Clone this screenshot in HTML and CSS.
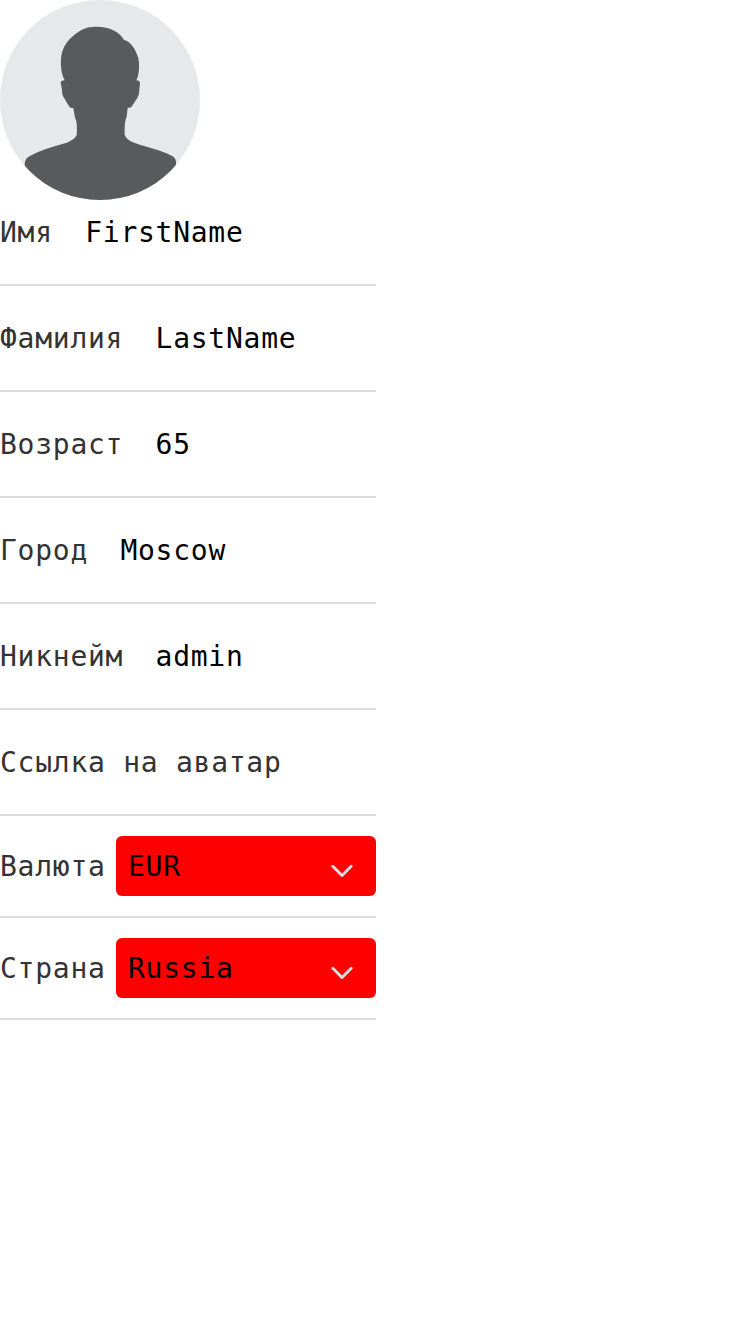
FILE: index.html
```html
<!DOCTYPE html>
<html lang="ru">
<head>
<meta charset="utf-8">
<title>Профиль</title>
<link rel="stylesheet" href="styles.css">
</head>
<body>
<main class="profile">
  <svg class="avatar" viewBox="0 0 600 600" aria-hidden="true">
    <defs><clipPath id="round"><circle cx="300" cy="300" r="300"/></clipPath></defs>
    <circle cx="300" cy="300" r="300" fill="#e7e8ea"/>
    <path clip-path="url(#round)" fill="#595a5c" d="M194 241C180 215 179 170 190 146C200 123 222 104 238 94C257 82 270 80 291 80C327 80 361 96 372 120C391 122 408 150 415 174C419 196 418 224 409 241C416 241 420 244 420 250L417 280C416 292 402 308 396 319C393 324 388 323 383 324L380 350C373 366 374 388 374 404C377 415 390 424 407 430C439 442 479 449 515 467C526 472 529 482 528 493L528 600H74V493C74 480 80 472 91 467C123 451 161 439 195 430C211 425 226 415 230 405C231 388 232 365 225 353L220 324C214 324 210 324 207 319L190 290C185 281 187 264 182 250C182 244 186 241 194 241Z"/>
  </svg>
  <div class="row"><span class="label">Имя</span><span class="value">FirstName</span></div>
  <div class="row"><span class="label">Фамилия</span><span class="value">LastName</span></div>
  <div class="row"><span class="label">Возраст</span><span class="value">65</span></div>
  <div class="row"><span class="label">Город</span><span class="value">Moscow</span></div>
  <div class="row"><span class="label">Никнейм</span><span class="value">admin</span></div>
  <div class="row"><span class="label">Ссылка на аватар</span></div>
  <div class="row row-select">
    <span class="label">Валюта</span>
    <div class="select"><span>EUR</span><svg class="chevron" viewBox="0 0 24 16"><path d="M2.8 3.3L12 12.5L21.2 3.3"/></svg></div>
  </div>
  <div class="row row-select">
    <span class="label">Страна</span>
    <div class="select"><span>Russia</span><svg class="chevron" viewBox="0 0 24 16"><path d="M2.8 3.3L12 12.5L21.2 3.3"/></svg></div>
  </div>
</main>
</body>
</html>
```
FILE: styles.css
```css
body {
  margin: 0;
  background: #fff;
  color: #000;
  font-family: "DejaVu Sans Mono", monospace;
  font-size: 28px;
  letter-spacing: 0.74px;
}
.profile {
  display: flex;
  flex-direction: column;
  gap: 20px;
  width: 376px;
}
.avatar {
  display: block;
  width: 200px;
  height: 200px;
  margin-bottom: -20px;
}
.row {
  display: flex;
  align-items: center;
  height: 64px;
  padding-bottom: 20px;
  border-bottom: 2px solid #dcdcdc;
  white-space: nowrap;
}
.row-select {
  justify-content: space-between;
  height: 60px;
}
.label {
  color: #333;
}
.value {
  padding-left: 32.4px;
}
.select {
  display: flex;
  align-items: center;
  justify-content: space-between;
  box-sizing: border-box;
  width: 260px;
  height: 60px;
  padding: 0 22px 0 12px;
  border-radius: 6px;
  background: #f00;
}
.chevron {
  width: 24px;
  height: 16px;
  margin-top: 10px;
  fill: none;
  stroke: #dcdcdc;
  stroke-width: 3;
  stroke-linecap: round;
  stroke-linejoin: round;
}
```
